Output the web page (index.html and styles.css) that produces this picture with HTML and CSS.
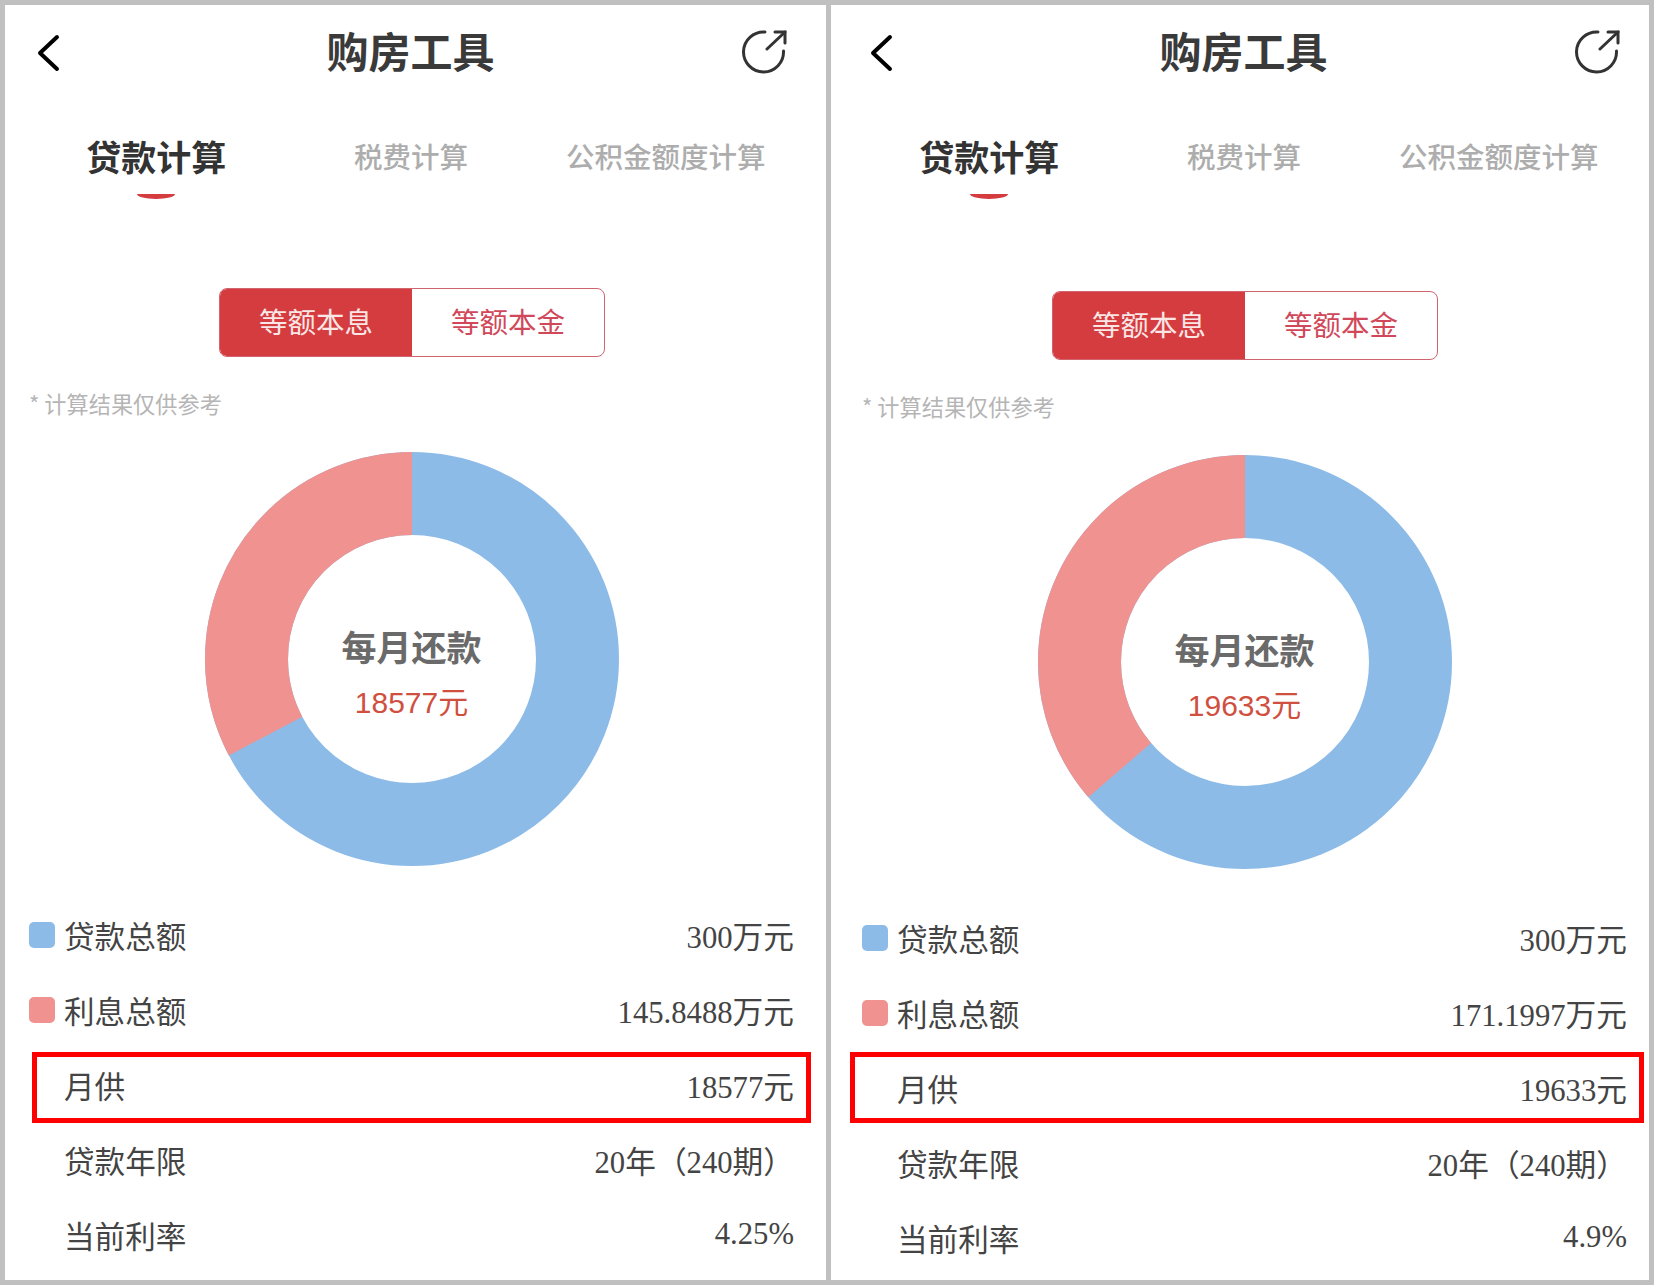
FILE: index.html
```html
<!DOCTYPE html>
<html lang="zh-CN">
<head>
    <meta charset="UTF-8">
    <meta name="viewport" content="width=device-width, initial-scale=1.0">
    <title>购房工具</title>
    <link rel="stylesheet" href="styles.css">
</head>
<body>
    <div class="compare">
        <div class="panel">
            <div class="header">
                <svg class="back-icon" width="24" height="38" viewBox="0 0 24 38"><path d="M21 3 L4 19 L21 35"/></svg>
                <h1>购房工具</h1>
                <svg class="share-icon" width="46" height="46" viewBox="0 0 46 46"><path d="M23 2 A20 20 0 1 0 41.5 21"/><path d="M25 19 L43 2"/><path d="M33 2 H43 V13"/></svg>
            </div>
            <div class="tabs">
                <div class="tab active"><span>贷款计算</span><i class="tab-mark"></i></div>
                <div class="tab"><span>税费计算</span></div>
                <div class="tab"><span>公积金额度计算</span></div>
            </div>
            <div class="switch">
                <div class="switch-item on"><span>等额本息</span></div>
                <div class="switch-item"><span>等额本金</span></div>
            </div>
            <p class="note">* 计算结果仅供参考</p>
            <div class="donut">
                <svg width="414" height="414" viewBox="0 0 414 414">
                    <circle class="ring-blue" cx="207" cy="207" r="165.5" pathLength="100"/>
                    <circle class="ring-red" cx="207" cy="207" r="165.5" pathLength="100" stroke-dasharray="32.71 100" stroke-dashoffset="-67.29" transform="rotate(-90 207 207)"/>
                </svg>
                <div class="donut-text">
                    <div class="donut-title">每月还款</div>
                    <div class="donut-value">18577元</div>
                </div>
            </div>
            <div class="rows">
                <div class="row"><span class="label"><i class="swatch blue"></i>贷款总额</span><span class="value">300万元</span></div>
                <div class="row"><span class="label"><i class="swatch red"></i>利息总额</span><span class="value">145.8488万元</span></div>
                <div class="row marked"><span class="label plain">月供</span><span class="value">18577元</span></div>
                <div class="row"><span class="label plain">贷款年限</span><span class="value">20年（240期）</span></div>
                <div class="row"><span class="label plain">当前利率</span><span class="value">4.25%</span></div>
            </div>
        </div>

        <div class="panel panel-second">
            <div class="header">
                <svg class="back-icon" width="24" height="38" viewBox="0 0 24 38"><path d="M21 3 L4 19 L21 35"/></svg>
                <h1>购房工具</h1>
                <svg class="share-icon" width="46" height="46" viewBox="0 0 46 46"><path d="M23 2 A20 20 0 1 0 41.5 21"/><path d="M25 19 L43 2"/><path d="M33 2 H43 V13"/></svg>
            </div>
            <div class="tabs">
                <div class="tab active"><span>贷款计算</span><i class="tab-mark"></i></div>
                <div class="tab"><span>税费计算</span></div>
                <div class="tab"><span>公积金额度计算</span></div>
            </div>
            <div class="switch">
                <div class="switch-item on"><span>等额本息</span></div>
                <div class="switch-item"><span>等额本金</span></div>
            </div>
            <p class="note">* 计算结果仅供参考</p>
            <div class="donut">
                <svg width="414" height="414" viewBox="0 0 414 414">
                    <circle class="ring-blue" cx="207" cy="207" r="165.5" pathLength="100"/>
                    <circle class="ring-red" cx="207" cy="207" r="165.5" pathLength="100" stroke-dasharray="36.33 100" stroke-dashoffset="-63.67" transform="rotate(-90 207 207)"/>
                </svg>
                <div class="donut-text">
                    <div class="donut-title">每月还款</div>
                    <div class="donut-value">19633元</div>
                </div>
            </div>
            <div class="rows">
                <div class="row"><span class="label"><i class="swatch blue"></i>贷款总额</span><span class="value">300万元</span></div>
                <div class="row"><span class="label"><i class="swatch red"></i>利息总额</span><span class="value">171.1997万元</span></div>
                <div class="row marked"><span class="label plain">月供</span><span class="value">19633元</span></div>
                <div class="row"><span class="label plain">贷款年限</span><span class="value">20年（240期）</span></div>
                <div class="row"><span class="label plain">当前利率</span><span class="value">4.9%</span></div>
            </div>
        </div>
    </div>
</body>
</html>
```

FILE: styles.css
```css
/* --- Base --- */
* {
    margin: 0;
    padding: 0;
    box-sizing: border-box;
}

body {
    background: #c0c0c0;
    font-family: "Noto Sans CJK SC", sans-serif;
    color: #444;
}

.compare {
    display: grid;
    grid-template-columns: 821px 818px;
    gap: 5px;
    padding: 5px 5px 5px 5px;
}

.panel {
    height: 1275px;
    padding: 0 33px 0 24px;
    background: #fff;
    overflow: hidden;
}

.panel-second {
    padding: 0 23px 0 31px;
}

/* --- Header --- */
.header {
    height: 94px;
    padding: 0 5px 0 7px;
    display: grid;
    grid-template-columns: 1fr auto 1fr;
    align-items: center;
}

.header h1 {
    margin-right: 3px;
    padding-bottom: 4px;
    font-size: 42px;
    font-weight: 700;
    line-height: 1;
    color: #3a3a3a;
}

.back-icon {
    margin-top: 2px;
    fill: none;
    stroke: #000;
    stroke-width: 4;
    stroke-linecap: round;
    stroke-linejoin: round;
}

.share-icon {
    justify-self: end;
    margin-top: 2px;
    fill: none;
    stroke: #333;
    stroke-width: 3;
    stroke-linecap: round;
}

/* --- Tabs --- */
.tabs {
    display: grid;
    grid-template-columns: repeat(3, 1fr);
    height: 100px;
}

.tab {
    display: flex;
    flex-direction: column;
    align-items: center;
    padding-top: 34px;
    font-size: 28.5px;
    font-weight: 500;
    line-height: 46px;
    color: #adadad;
}

.tab.active {
    font-size: 35px;
    font-weight: 700;
    color: #333;
}

.tab-mark {
    width: 38px;
    height: 5px;
    margin-top: 15px;
    background: #d43c3f;
    border-radius: 0 0 19px 19px / 0 0 5px 5px;
}

/* --- Switch --- */
.switch {
    display: flex;
    width: 386px;
    height: 69px;
    margin: 89px 0 0 190px;
    border: 1px solid #d0656f;
    border-radius: 8px;
    overflow: hidden;
}

.panel-second .switch {
    margin-top: 92px;
}

.switch-item {
    flex: 1;
    display: flex;
    align-items: center;
    justify-content: center;
    padding-bottom: 5px;
    font-size: 28.5px;
    color: #d0485a;
}

.switch-item.on {
    background: #d43c3f;
    color: #fbe6e6;
}

.note {
    margin-top: 31px;
    font-size: 22.2px;
    line-height: 30px;
    color: #b5b5b5;
}

/* --- Donut --- */
.donut {
    display: grid;
    justify-items: center;
    align-items: center;
    margin-top: 34px;
    padding-left: 1px;
}

.donut svg,
.donut-text {
    grid-area: 1 / 1;
}

.ring-blue,
.ring-red {
    fill: none;
    stroke-width: 83;
}

.ring-blue {
    stroke: #8dbbe8;
}

.ring-red {
    stroke: #ef9290;
}

.donut-text {
    padding-top: 27px;
    text-align: center;
}

.donut-title {
    font-size: 35px;
    font-weight: 700;
    line-height: 50px;
    color: #6a6a6a;
}

.donut-value {
    margin-top: 10px;
    font-family: "Liberation Sans", "Noto Sans CJK SC", sans-serif;
    font-size: 30px;
    line-height: 44px;
    color: #d0503f;
}

/* --- Rows --- */
.rows {
    margin-top: 31px;
}

.row {
    display: flex;
    justify-content: space-between;
    align-items: center;
    height: 75px;
}

.label {
    display: flex;
    align-items: center;
    font-size: 30.6px;
}

.label.plain {
    padding-left: 35px;
}

.value {
    margin-right: -1px;
    font-family: "Liberation Serif", "Noto Sans CJK SC", serif;
    font-size: 30.7px;
}

.swatch {
    width: 26px;
    height: 26px;
    margin-right: 9px;
    border-radius: 5px;
}

.swatch.blue {
    background: #8dbbe8;
}

.swatch.red {
    background: #ef9290;
}

/* --- Red annotation box --- */
.marked {
    position: relative;
}

.marked::after {
    content: "";
    position: absolute;
    top: 5px;
    right: -18px;
    bottom: -1px;
    left: 3px;
    border: 5px solid #f00;
}

.panel-second .marked::after {
    top: 2px;
    bottom: 2px;
    left: -12px;
}
```
